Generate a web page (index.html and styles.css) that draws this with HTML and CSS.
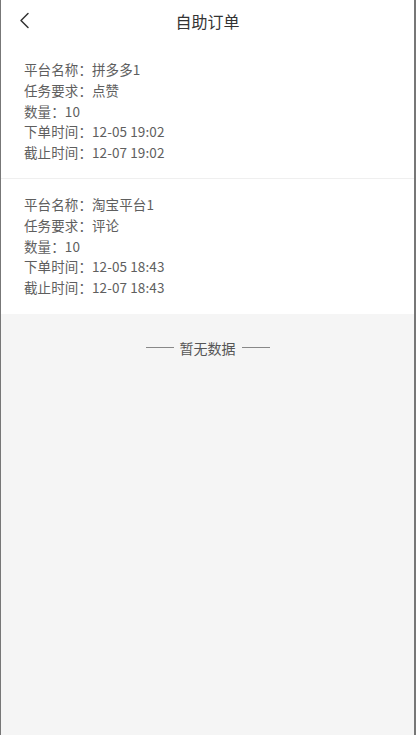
FILE: index.html
```html
<!DOCTYPE html>
<html lang="zh-CN">
<head>
<meta charset="utf-8">
<title>自助订单</title>
<link rel="stylesheet" href="styles.css">
</head>
<body>
<div class="frame">
  <header class="nav">
    <span class="back">
      <svg width="12" height="18" viewBox="0 0 12 18"><path d="M9 1.5 L2 8.5 L9 15.5" fill="none" stroke="#333" stroke-width="1.5" stroke-linecap="round" stroke-linejoin="round"/></svg>
    </span>
    <h1 class="title">自助订单</h1>
  </header>
  <main class="list">
    <section class="card">
      <p class="row">平台名称：拼多多1</p>
      <p class="row">任务要求：点赞</p>
      <p class="row">数量：10</p>
      <p class="row">下单时间：12-05 19:02</p>
      <p class="row">截止时间：12-07 19:02</p>
    </section>
    <section class="card">
      <p class="row">平台名称：淘宝平台1</p>
      <p class="row">任务要求：评论</p>
      <p class="row">数量：10</p>
      <p class="row">下单时间：12-05 18:43</p>
      <p class="row">截止时间：12-07 18:43</p>
    </section>
  </main>
  <div class="empty">
    <span class="dash"></span>
    <span class="empty-text">暂无数据</span>
    <span class="dash"></span>
  </div>
</div>
</body>
</html>
```

FILE: styles.css
```css
* { box-sizing: border-box; }
html, body {
  margin: 0;
  padding: 0;
  height: 100%;
}
body {
  font-family: "Noto Sans CJK SC", "Noto Sans", sans-serif;
  background: #f5f5f5;
}
.frame {
  min-height: 735px;
  background: #f5f5f5;
  border-left: 1px solid #777;
  border-right: 2px solid #777;
  display: flex;
  flex-direction: column;
}
.nav {
  position: relative;
  height: 44px;
  background: #fff;
  display: flex;
  align-items: center;
  justify-content: center;
}
.back {
  position: absolute;
  left: 18px;
  top: 12px;
  width: 12px;
  height: 18px;
  display: block;
}
.back svg { display: block; }
.title {
  margin: 0 0 2px 0;
  font-size: 16px;
  font-weight: 400;
  color: #333;
  line-height: 20px;
}
.list {
  background: #fff;
}
.card {
  padding: 15px 23px;
}
.card + .card {
  border-top: 1px solid #efefef;
  padding-bottom: 16px;
}
.row {
  margin: 0;
  font-size: 13.5px;
  line-height: 20.8px;
  color: #5e5e5e;
  letter-spacing: 0.1px;
  white-space: nowrap;
}
.empty {
  padding-top: 24px;
  display: flex;
  align-items: center;
  justify-content: center;
  gap: 6px;
}
.dash {
  width: 28px;
  height: 1px;
  background: #888;
}
.empty-text {
  font-size: 14px;
  line-height: 20px;
  color: #555;
}
```
